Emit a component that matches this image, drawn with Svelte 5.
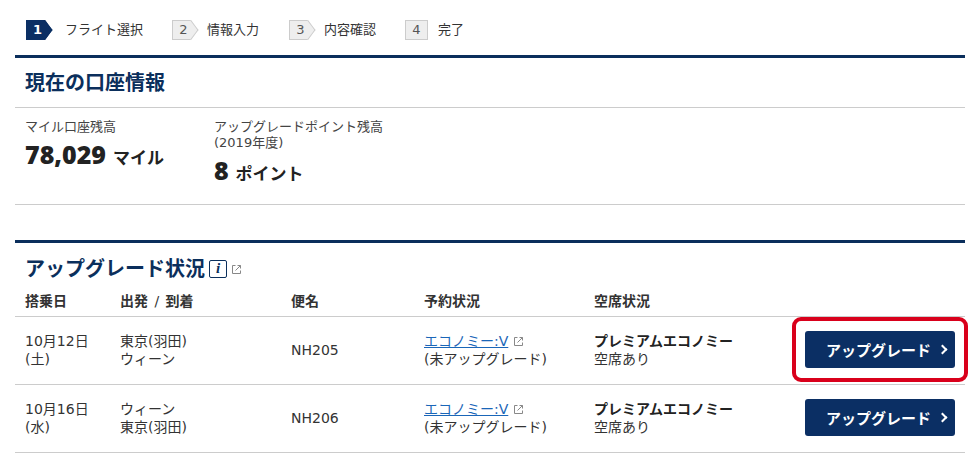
<script>
  const steps = [
    { n: 1, label: 'フライト選択', active: true, arrow: true, w: 146 },
    { n: 2, label: '情報入力', arrow: true, w: 117 },
    { n: 3, label: '内容確認', arrow: true, w: 116 },
    { n: 4, label: '完了', arrow: false }
  ];

  const flights = [
    { date: '10月12日', day: '(土)', from: '東京(羽田)', to: 'ウィーン', no: 'NH205', highlight: true },
    { date: '10月16日', day: '(水)', from: 'ウィーン', to: '東京(羽田)', no: 'NH206', highlight: false }
  ];
</script>

{#snippet extIcon()}
  <svg class="ext" width="11" height="11" viewBox="0 0 11 11" fill="none" stroke="#888" stroke-width="1">
    <path d="M4.5 1.5H1.5v8h8V6.5" />
    <path d="M4.5 6.5L9.5 1.5M6.5 1.5h3v3" />
  </svg>
{/snippet}

<div class="page">
  <ol class="steps">
    {#each steps as s}
      <li class="step" class:active={s.active} style={s.w ? `width:${s.w}px` : ''}>
        <span class="num" class:arrow={s.arrow}><span class="digit">{s.n}</span></span>
        <span class="step-label">{s.label}</span>
      </li>
    {/each}
  </ol>

  <section class="account">
    <h2>現在の口座情報</h2>
    <div class="balances">
      <div class="bal miles">
        <div class="bal-label">マイル口座残高</div>
        <div class="bal-value"><strong>78,029</strong> マイル</div>
      </div>
      <div class="bal">
        <div class="bal-label">アップグレードポイント残高<br />(2019年度)</div>
        <div class="bal-value pts"><strong>8</strong> ポイント</div>
      </div>
    </div>
  </section>

  <section class="upgrade">
    <h2>アップグレード状況
      <span class="info">i</span>
      {@render extIcon()}
    </h2>
    <div class="row head">
      <div>搭乗日</div>
      <div class="route">出発 <span class="slash">/</span> 到着</div>
      <div>便名</div>
      <div>予約状況</div>
      <div>空席状況</div>
    </div>
    {#each flights as f}
      <div class="row">
        <div>{f.date}<br />{f.day}</div>
        <div>{f.from}<br />{f.to}</div>
        <div>{f.no}</div>
        <div><a href="#top">エコノミー:V</a> {@render extIcon()}<br />(未アップグレード)</div>
        <div><b>プレミアムエコノミー</b><br />空席あり</div>
        <div class="action" class:highlight={f.highlight}>
          <button>アップグレード<span class="chev"></span></button>
        </div>
      </div>
    {/each}
  </section>
</div>

<style>
  :global(body) {
    margin: 0;
    background: #fff;
  }

  .page {
    width: 950px;
    margin-left: 15px;
    font-family: "DejaVu Sans", "Noto Sans CJK JP", sans-serif;
    font-size: 13px;
    line-height: 18px;
    color: #333;
  }

  .steps {
    display: flex;
    list-style: none;
    margin: 0;
    padding: 20px 0 15px 11px;
  }

  .step {
    display: flex;
    align-items: center;
    height: 20px;
  }

  .num {
    position: relative;
    box-sizing: border-box;
    width: 23px;
    height: 20px;
    text-align: center;
    line-height: 18px;
    font-size: 13px;
    color: #555;
    background: #eee;
    border: 1px solid #ccc;
    margin-right: 10px;
  }

  .digit {
    position: relative;
    z-index: 1;
  }

  .num.arrow {
    width: 19px;
    padding-left: 3px;
    border-right: none;
    margin-right: 16px;
  }

  .num.arrow::after {
    content: "";
    position: absolute;
    top: 2px;
    right: -7px;
    width: 14px;
    height: 14px;
    box-sizing: border-box;
    background: #eee;
    border-top: 1px solid #ccc;
    border-right: 1px solid #ccc;
    transform: scaleX(0.75) rotate(45deg);
  }

  .active .num {
    background: #0b2f64;
    border-color: #0b2f64;
    color: #fff;
    font-weight: bold;
  }

  .active .num.arrow {
    margin-right: 20px;
  }

  .active .num.arrow::after {
    background: #0b2f64;
    border-color: #0b2f64;
  }

  .step-label {
    font-size: 13px;
    color: #333;
  }

  h2 {
    margin: 0;
    font-size: 20px;
    line-height: 28px;
    font-weight: bold;
    color: #0b2f5c;
    padding: 0 0 0 10px;
  }

  .account {
    border-top: 3px solid #0b2f5c;
  }

  .account h2 {
    padding-top: 11px;
    padding-bottom: 10px;
    border-bottom: 1px solid #ccc;
  }

  .balances {
    display: flex;
    height: 97px;
    padding: 11px 0 0 10px;
    box-sizing: border-box;
    border-bottom: 1px solid #ccc;
  }

  .bal.miles {
    width: 189px;
  }

  .bal-label {
    line-height: 16px;
    color: #444;
  }

  .bal-value {
    font-size: 17px;
    font-weight: bold;
    color: #222;
    line-height: 34px;
    margin-top: 2px;
  }

  .bal-value.pts {
    margin-top: 2px;
  }

  .bal-value strong {
    font-family: "Open Sans", sans-serif;
    font-size: 25px;
    margin-right: 1px;
  }

  .upgrade {
    margin-top: 35px;
    border-top: 3px solid #0b2f5c;
  }

  .upgrade h2 {
    padding-top: 12px;
    padding-bottom: 5px;
    display: flex;
    align-items: center;
    gap: 4px;
  }

  .info {
    box-sizing: border-box;
    width: 18px;
    height: 18px;
    border: 1.5px solid #0b2f5c;
    border-radius: 2px;
    font-family: "Liberation Serif", serif;
    font-style: italic;
    font-size: 15px;
    line-height: 15px;
    text-align: center;
  }

  .row {
    display: grid;
    grid-template-columns: 95px 171px 133px 170px 1fr 176px;
    align-items: center;
    height: 68px;
    padding: 0 0 2px 10px;
    border-bottom: 1px solid #ccc;
    box-sizing: border-box;
    font-size: 14px;
  }

  .row.head {
    height: 29px;
    padding: 4px 0 0 10px;
    font-weight: bold;
    align-items: start;
    color: #333;
  }

  .slash {
    font-weight: normal;
    margin: 0 1.5px;
  }

  a {
    color: #1a66b8;
    text-decoration: underline;
  }

  .ext {
    vertical-align: -1px;
  }

  b {
    color: #222;
  }

  .action {
    box-sizing: border-box;
    height: 65px;
    width: 176px;
    margin: 0 -3px 0 3px;
    display: flex;
    align-items: center;
    justify-content: center;
    border: 4px solid transparent;
    border-radius: 9px;
  }

  .action.highlight {
    border-color: #d9001b;
  }

  button {
    position: relative;
    flex: none;
    width: 150px;
    height: 37px;
    border: none;
    border-radius: 3px;
    background: #0b2f64;
    color: #fff;
    font: bold 15px "Liberation Sans", "Noto Sans CJK JP", sans-serif;
    text-align: left;
    padding: 0 0 0 21px;
  }

  .chev {
    position: absolute;
    right: 9px;
    top: 15px;
    width: 7px;
    height: 7px;
    border-top: 2px solid #fff;
    border-right: 2px solid #fff;
    box-sizing: border-box;
    transform: rotate(45deg);
  }
</style>
